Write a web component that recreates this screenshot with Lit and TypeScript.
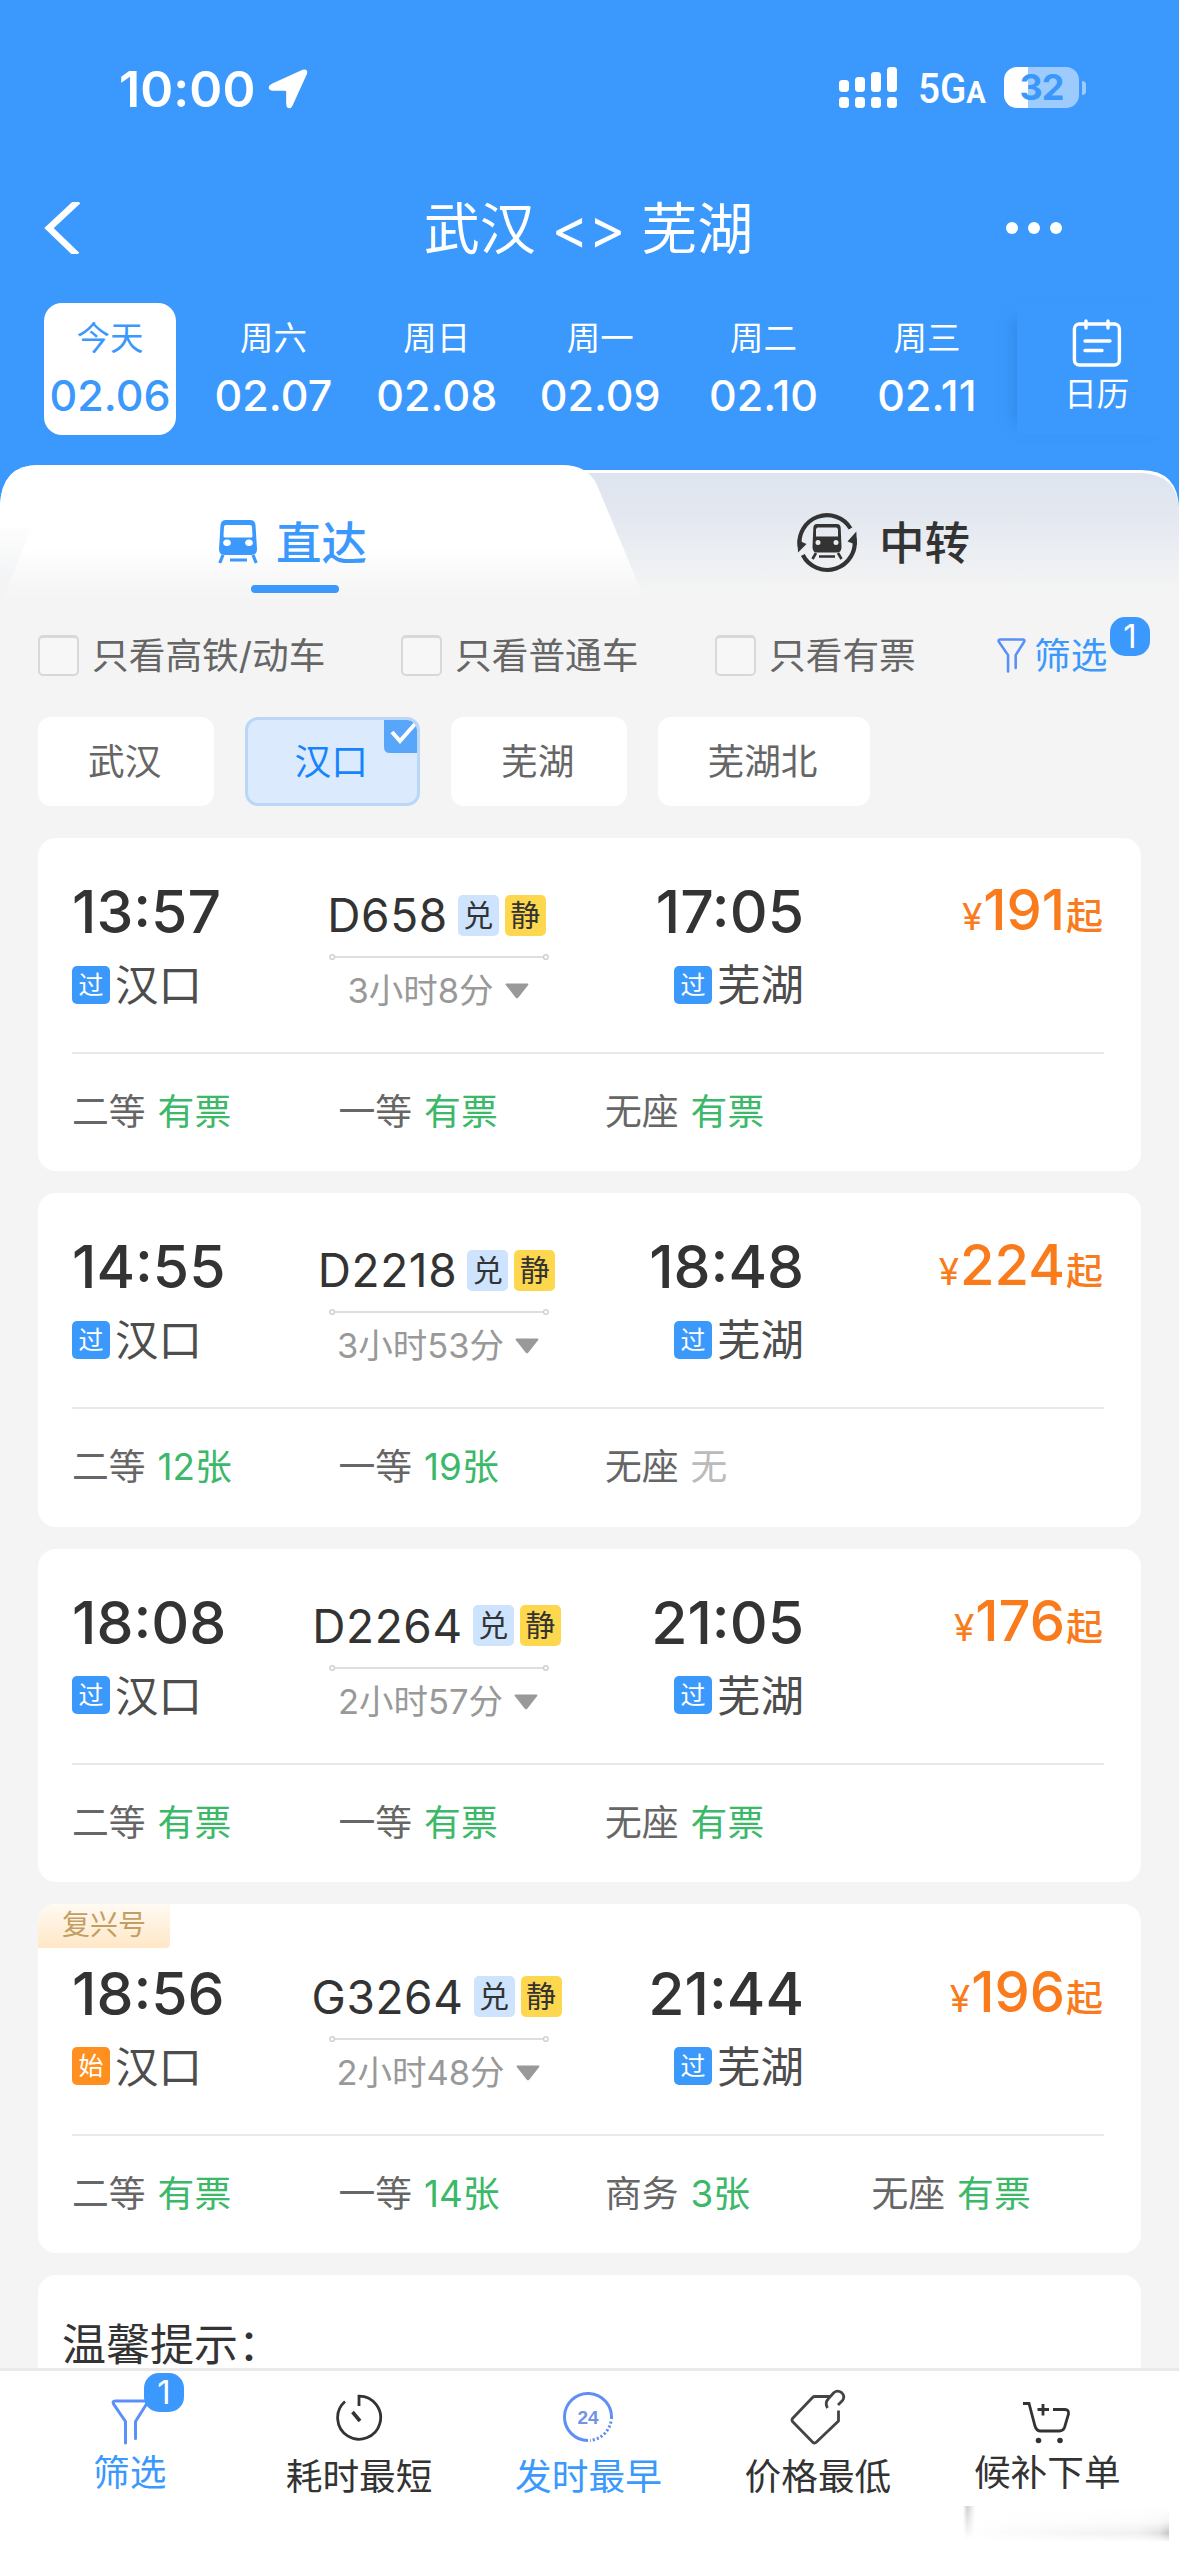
import { LitElement, html, css, svg, nothing } from "lit";
import { customElement, property } from "lit/decorators.js";
import { classMap } from "lit/directives/class-map.js";

interface Seat { kind: string; left: string; none?: boolean }
interface Train {
  dep: string; arr: string; code: string; from: string; to: string;
  origin?: boolean; span: string; price: string; ribbon?: string; seats: Seat[];
}

const DAYS = [
  ["今天", "02.06"], ["周六", "02.07"], ["周日", "02.08"],
  ["周一", "02.09"], ["周二", "02.10"], ["周三", "02.11"],
];

const TRAINS: Train[] = [
  { dep: "13:57", arr: "17:05", code: "D658", from: "汉口", to: "芜湖", span: "3小时8分", price: "191",
    seats: [{ kind: "二等", left: "有票" }, { kind: "一等", left: "有票" }, { kind: "无座", left: "有票" }] },
  { dep: "14:55", arr: "18:48", code: "D2218", from: "汉口", to: "芜湖", span: "3小时53分", price: "224",
    seats: [{ kind: "二等", left: "12张" }, { kind: "一等", left: "19张" }, { kind: "无座", left: "无", none: true }] },
  { dep: "18:08", arr: "21:05", code: "D2264", from: "汉口", to: "芜湖", span: "2小时57分", price: "176",
    seats: [{ kind: "二等", left: "有票" }, { kind: "一等", left: "有票" }, { kind: "无座", left: "有票" }] },
  { dep: "18:56", arr: "21:44", code: "G3264", from: "汉口", to: "芜湖", origin: true, span: "2小时48分", price: "196", ribbon: "复兴号",
    seats: [{ kind: "二等", left: "有票" }, { kind: "一等", left: "14张" }, { kind: "商务", left: "3张" }, { kind: "无座", left: "有票" }] },
];

const FONT = css`Inter, "Noto Sans CJK SC", sans-serif`;

const funnel = (w: number, h: number, sw: number) => html`
  <svg width=${w} height=${h} viewBox="0 0 38 46" fill="none" stroke="#5b8ff9" stroke-width=${sw} stroke-linecap="round" stroke-linejoin="round">
    <path d="M14.5 44V22.5L2.6 5.2Q1 2 4.4 2H33.6Q37 2 35.4 5.2L24.5 22.5V39.5"/>
  </svg>`;

@customElement("status-bar")
class StatusBar extends LitElement {
  static styles = css`
    :host { display: block; font-family: ${FONT}; color: #fff; }
    .bar { display: flex; align-items: center; height: 175px; padding: 0 93px 0 119px; }
    .clock { font-size: 50px; font-weight: 600; line-height: 60px; letter-spacing: 0.1px; margin-top: 2px; }
    .arrow { margin: 2px 0 0 12px; }
    .signal { margin-left: auto; }
    .net { font-family: Roboto, sans-serif; font-size: 42.5px; font-weight: 500; line-height: 50px; width: 68px; margin: 5px 18px 0 20px; white-space: nowrap; }
    .squeeze { display: inline-block; transform: scaleX(0.91); transform-origin: 0 50%; }
    .small { font-size: 32px; font-weight: 700; }
    .batt { display: flex; align-items: center; gap: 3px; }
    .cell { width: 75px; height: 41px; border-radius: 13px; display: flex; align-items: center; justify-content: center;
      background: linear-gradient(90deg, #fff 24px, #9dcbfd 24px); color: #3a98fb; font-size: 36px; font-weight: 700; letter-spacing: -1px; line-height: 41px; }
    .tip { width: 4px; height: 14px; border-radius: 0 4px 4px 0; background: #9dcbfd; }
  `;
  render() {
    const bars = [[0, 13], [16, 10], [32, 5], [48, 0]];
    return html`<div class="bar">
      <span class="clock">10:00</span>
      <svg class="arrow" width="40" height="40" viewBox="0 0 40 40" fill="#fff">
        <path d="M34.6 .8Q40.2-.8 39 4.800L24.600 36.600Q22.800 40.300 20.200 39Q18.200 38 18.200 35V23Q18.200 21.800 17 21.800H5Q1.200 21.600 .8 19Q.4 16.400 3.800 14.800Z"/>
      </svg>
      <svg class="signal" width="59" height="42" viewBox="0 0 59 42" fill="#fff">
        ${bars.map(([x, y]) => svg`<rect x=${x} y=${y} width="10" height=${25 - y} rx="3.4"/><rect x=${x} y="30" width="10" height="11" rx="3.4"/>`)}
      </svg>
      <span class="net"><span class="squeeze">5G<span class="small">A</span></span></span>
      <div class="batt"><div class="cell">32</div><div class="tip"></div></div>
    </div>`;
  }
}

@customElement("train-card")
class TrainCard extends LitElement {
  @property({ attribute: false }) train!: Train;
  static styles = css`
    :host { display: block; font-family: ${FONT}; }
    .card { box-sizing: border-box; background: #fff; border-radius: 18px; height: 333.4px; overflow: hidden; padding: 44px 37px 0 34px; }
    .flagged { height: 349px; padding-top: 0; }
    .ribbon { width: 132px; height: 44px; margin: 0 0 15.5px -34px; box-sizing: border-box; padding-left: 24px; border-radius: 18px 0 4px 0;
      background: linear-gradient(#fffaf3, #ffe7c6); color: #c39e63; font-size: 28px; line-height: 42px; white-space: nowrap; }
    .main { display: grid; grid-template-columns: 216px 300px 216px 1fr; height: 170px; align-items: start; }
    .time { font-size: 58.8px; line-height: 60px; color: #333; font-weight: 450; letter-spacing: 0; }
    .end { display: flex; flex-direction: column; gap: 21px; align-items: flex-start; white-space: nowrap; }
    .right { align-items: flex-end; }
    .stop { display: flex; align-items: center; gap: 5px; height: 44px; font-size: 43.5px; line-height: 44px; color: #4d4d4d; }
    .stop span { margin-top: -1px; }
    .mark { width: 38px; height: 38px; border-radius: 5px; background: #3b99fc; color: #fff; font-size: 25px; line-height: 38px; text-align: center; }
    .origin { background: #ff8f1f; }
    .mid { display: flex; flex-direction: column; align-items: center; padding-top: 11px; }
    .name { display: flex; align-items: center; height: 44px; gap: 6px; color: #333; margin-left: -3px; }
    .code { font-size: 46px; line-height: 44px; margin-right: 4px; letter-spacing: 0.6px; }
    .tag { width: 41px; height: 41px; border-radius: 5px; font-size: 30px; line-height: 40px; text-align: center; background: #cde3fe; }
    .quiet { background: #fdd84e; }
    .line { margin-top: 16px; margin-left: 2px; }
    .span { display: flex; align-items: center; gap: 11px; margin-top: 10px; height: 40px; font-size: 34.5px; line-height: 40px; color: #999; white-space: nowrap; }
    .price { display: flex; align-items: baseline; justify-content: flex-end; color: #f97b1c; line-height: 56px; white-space: nowrap; margin-right: 1px; }
    .yen { font-size: 37px; }
    .sum { font-size: 56px; font-weight: 500; letter-spacing: 0; margin-left: 1px; }
    .up { font-size: 37px; margin-left: 1px; font-weight: 500; }
    .seats { display: grid; grid-template-columns: repeat(4, 266.5px); border-top: 2px solid #e9e9e9; padding-top: 38px; }
    .seat { display: flex; gap: 12px; font-size: 36.8px; line-height: 40px; color: #666; white-space: nowrap; }
    .ok { color: #3bb868; }
    .no { color: #bbb; }
  `;
  render() {
    const t = this.train;
    return html`<article class=${classMap({ card: true, flagged: !!t.ribbon })}>
      ${t.ribbon ? html`<div class="ribbon">${t.ribbon}</div>` : nothing}
      <div class="main">
        <div class="end">
          <div class="time">${t.dep}</div>
          <div class="stop"><span class=${classMap({ mark: true, origin: !!t.origin })}>${t.origin ? "始" : "过"}</span>${t.from}</div>
        </div>
        <div class="mid">
          <div class="name"><span class="code">${t.code}</span><span class="tag">兑</span><span class="tag quiet">静</span></div>
          <svg class="line" width="220" height="8" viewBox="0 0 220 8" fill="none" stroke="#d3d3d3" stroke-width="1.6">
            <circle cx="3.2" cy="4" r="2.3"/><path d="M6 4H214"/><circle cx="216.8" cy="4" r="2.3"/>
          </svg>
          <div class="span">${t.span}<svg width="24" height="16" viewBox="0 0 24 16" fill="#999"><path d="M1.5.4H22.5Q24 .6 23 2.2L13.4 14.6Q12 16.2 10.6 14.6L1 2.2Q0 .6 1.5 .4Z"/></svg></div>
        </div>
        <div class="end right">
          <div class="time">${t.arr}</div>
          <div class="stop"><span class="mark">过</span>${t.to}</div>
        </div>
        <div class="price"><span class="yen">¥</span><span class="sum">${t.price}</span><span class="up">起</span></div>
      </div>
      <div class="seats">
        ${t.seats.map((s) => html`<div class="seat"><span>${s.kind}</span><span class=${s.none ? "no" : "ok"}>${s.left}</span></div>`)}
      </div>
    </article>`;
  }
}

@customElement("app-root")
class AppRoot extends LitElement {
  static styles = css`
    :host { display: block; width: 1179px; height: 2556px; overflow: hidden; position: relative; background: #f4f4f4; font-family: ${FONT}; color: #333; }
    .page { display: flex; flex-direction: column; height: 2556px; }
    .head { background: #3b98fc; color: #fff; height: 465px; flex: none; }
    .nav { display: grid; grid-template-columns: 250px 1fr 250px; align-items: center; height: 105px; }
    .back { margin-left: 44px; }
    .title { text-align: center; font-size: 56px; line-height: 70px; white-space: pre; padding: 3px 2px 0 0; }
    .more { margin-left: 77px; }
    .days { display: flex; margin-top: 23px; padding-left: 44px; height: 132px; }
    .day { width: 132px; margin-right: 31.4px; height: 132px; box-sizing: border-box; padding-top: 15px; text-align: center; border-radius: 18px; white-space: nowrap; flex: none; }
    .on { background: #fff; color: #3b98fc; }
    .week { font-size: 33.5px; line-height: 40px; }
    .date { font-size: 43px; line-height: 40px; margin-top: 17px; letter-spacing: 0; font-weight: 450; }
    .cal { flex: 1; margin-left: -7px; display: flex; flex-direction: column; align-items: center; padding-top: 16px; height: 116px; font-size: 32.5px; line-height: 38px; gap: 9px;
      padding-right: 3px; box-shadow: -14px 2px 14px -13px #2e86e2; }
    .tabs { position: relative; height: 135px; flex: none; background: linear-gradient(#3b98fc 60px, #f4f4f4 60px); display: grid; grid-template-columns: 598px 1fr; }
    .shape { position: absolute; left: 0; top: 0; }
    .tab { position: relative; display: flex; align-items: center; height: 154px; font-size: 45.5px; line-height: 50px; }
    .tab span { padding-top: 3px; }
    .direct { padding-left: 218px; gap: 18px; color: #3b98fc; font-weight: 500; }
    .direct::after { content: ""; position: absolute; left: 251px; top: 120px; width: 88px; height: 8px; border-radius: 4px; background: #3b98fc; }
    .transfer { padding-left: 199px; gap: 20px; font-weight: 500; }
    .filters { display: grid; grid-template-columns: 363px 314px 282px auto; align-items: center; padding: 35px 0 0 38px; height: 40px; font-size: 36.7px; line-height: 40px; color: #666; white-space: nowrap; flex: none; }
    .check { display: flex; align-items: center; gap: 13px; }
    .box { width: 41px; height: 41px; box-sizing: border-box; border: 2px solid #d8d8d8; border-top-width: 3px; border-radius: 5px; background: #f7f7f7; }
    .pick { position: relative; display: flex; align-items: center; gap: 8px; color: #3b98fc; }
    .badge { position: absolute; box-sizing: border-box; width: 40px; height: 39px; border-radius: 15px; background: #3b98fc; color: #fff; font-size: 33px; line-height: 38px; text-align: center; }
    .pickbadge { left: 113px; top: -19px; }
    .chips { display: flex; gap: 31px; padding: 42px 38px 0; flex: none; }
    .chip { position: relative; box-sizing: border-box; width: 175.5px; height: 89px; border-radius: 13px; background: #fff; font-size: 36.7px; line-height: 89px; text-align: center; color: #666; overflow: hidden; padding-right: 2px; }
    .wide { width: 212px; }
    .active { background: #dbebfd; border: 3px solid #bad7f7; color: #1684fc; line-height: 83px; }
    .tick { position: absolute; right: 0; top: -1px; }
    .list { display: flex; flex-direction: column; gap: 22px; padding: 32px 38px 0; flex: 1; min-height: 0; }
    .tips { background: #fff; border-radius: 18px 18px 0 0; flex: 1; padding: 48px 0 0 24px; font-size: 44px; line-height: 44px; box-sizing: border-box; }
    .dock { height: 188px; flex: none; box-sizing: border-box; border-top: 3px solid #e9e9e9; background: #fff; padding: 0 17px 0 15px; display: grid; grid-template-columns: repeat(5, 1fr); }
    .item { position: relative; display: flex; flex-direction: column; align-items: center; font-size: 36.7px; line-height: 40px; white-space: nowrap; }
    .pic { height: 86px; display: flex; align-items: center; box-sizing: border-box; padding-top: 5px; }
    .edge .pic { height: 82px; padding-top: 20px; }
    .sel { color: #3b98fc; }
    .dockbadge { left: 129px; top: 2px; }
    .glare { position: absolute; right: 10px; bottom: 10px; }
  `;

  render() {
    return html`<div class="page">
      <header class="head">
        <status-bar></status-bar>
        <div class="nav">
          <svg class="back" width="38" height="52" viewBox="0 0 38 52" fill="none" stroke="#fff" stroke-width="6.5"><path d="M34 -1L5 26L33 53"/></svg>
          <div class="title">武汉 &lt;&gt; 芜湖</div>
          <svg class="more" width="56" height="14" viewBox="0 0 56 14" fill="#fff"><circle cx="6" cy="7" r="6"/><circle cx="28" cy="7" r="6"/><circle cx="50" cy="7" r="6"/></svg>
        </div>
        <div class="days">
          ${DAYS.map(([w, d], i) => html`<div class=${classMap({ day: true, on: i === 0 })}><div class="week">${w}</div><div class="date">${d}</div></div>`)}
          <div class="cal">
            <svg width="50" height="48" viewBox="0 0 50 48" fill="none" stroke="#fff" stroke-width="3.4" stroke-linecap="round">
              <rect x="2.4" y="5" width="45" height="41" rx="5"/><path d="M14 2V9M36 2V9M13 22H38M13 31.500H30"/>
            </svg>日历
          </div>
        </div>
      </header>

      <nav class="tabs">
        <svg class="shape" width="1179" height="135" viewBox="0 0 1179 135">
          <defs>
            <linearGradient id="r" x1="0" y1="0" x2="0" y2="1"><stop offset="0" stop-color="#dee4ef"/><stop offset=".35" stop-color="#e3e8f0"/><stop offset="1" stop-color="#f4f4f4"/></linearGradient>
            <linearGradient id="l" x1="0" y1="0" x2="0" y2="1"><stop offset="0" stop-color="#fff"/><stop offset=".6" stop-color="#fff"/><stop offset="1" stop-color="#f4f4f4"/></linearGradient>
            <linearGradient id="b" x1="0" y1="0" x2="0" y2="1"><stop offset="0" stop-color="#fff"/><stop offset=".4" stop-color="#fff"/><stop offset=".8" stop-color="#f4f5f6"/><stop offset="1" stop-color="#f4f4f4"/></linearGradient>
          </defs>
          <path d="M500 5H1141Q1179 5 1179 46V125H500Z" fill="#fff"/>
          <path d="M500 8H1141Q1179 9 1179 48V127H500Z" fill="url(#r)"/>
          <path d="M0 40Q2 0 38 0H200V135H0Z" fill="url(#b)"/>
          <path d="M0 40Q2 0 38 0H562Q588 0 597 20L645 135H3L31 62H0Z" fill="url(#l)"/>
        </svg>
        <div class="tab direct">
          <svg width="40" height="44" viewBox="0 0 40 44">
            <path fill="#3b98fc" fill-rule="evenodd" d="M8 0H32Q37 0 37.500 5L39 29Q39 35 33 35H7Q1 35 1 29L2.500 5Q3 0 8 0ZM8 5Q6 5 6 7L5.500 16Q5.500 17.500 7 17.500H33Q34.500 17.500 34.500 16L34 7Q34 5 32 5ZM9 19.500A3.300 3.300 0 1 0 9 26A3.300 3.300 0 1 0 9 19.500ZM31 19.500A3.300 3.300 0 1 0 31 26A3.300 3.300 0 1 0 31 19.500Z"/>
            <path d="M5 35L1.800 43M35 35L38.200 43M12 40H29" stroke="#3b98fc" stroke-width="3.200" fill="none"/>
          </svg>
          <span>直达</span>
        </div>
        <div class="tab transfer">
          <svg width="62" height="62" viewBox="0 0 62 62">
            <g fill="none" stroke="#333" stroke-width="4.200">
              <path d="M2.800 36A27.500 27.500 0 0 1 53.500 17.500"/><path d="M57.400 27A27.500 27.500 0 0 1 5.800 44"/>
              <path d="M19 42L15.500 48M41 42L44.500 48M22 45.500H38" stroke-width="2.600"/>
            </g>
            <path d="M1 41.500L.5 29L9.500 33ZM59.300 20.500L60 34L50.500 30.500Z" fill="#333"/>
            <path fill="#333" fill-rule="evenodd" d="M20 13H40Q43.500 13 43.700 17L44.500 36Q44.500 41.500 40 41.500H20Q15.500 41.500 15.500 36L16.300 17Q16.500 13 20 13ZM20.500 16.500L19 18V25.500H41V18L39.500 16.500ZM21 29A2.500 2.500 0 1 0 21 34A2.500 2.500 0 1 0 21 29ZM39 29A2.500 2.500 0 1 0 39 34A2.500 2.500 0 1 0 39 29Z"/>
          </svg>
          <span>中转</span>
        </div>
      </nav>

      <div class="filters">
        ${["只看高铁/动车", "只看普通车", "只看有票"].map((t) => html`<div class="check"><span class="box"></span>${t}</div>`)}
        <div class="pick">${funnel(29, 35, 3.4)}<span>筛选</span><span class="badge pickbadge">1</span></div>
      </div>

      <div class="chips">
        <div class="chip">武汉</div>
        <div class="chip active">汉口
          <svg class="tick" width="33" height="34" viewBox="0 0 33 34"><path d="M0 0H33V34H6Q0 34 0 28Z" fill="#57a6fa"/><path d="M8 13L16 22L31 5" fill="none" stroke="#fff" stroke-width="4"/></svg>
        </div>
        <div class="chip">芜湖</div>
        <div class="chip wide">芜湖北</div>
      </div>

      <main class="list">
        ${TRAINS.map((t) => html`<train-card .train=${t}></train-card>`)}
        <section class="tips">温馨提示：</section>
      </main>

      <footer class="dock">
        <div class="item edge sel"><div class="pic">${funnel(38, 46, 3)}</div>筛选<span class="badge dockbadge">1</span></div>
        <div class="item"><div class="pic">
          <svg width="48" height="50" viewBox="0 0 48 50" fill="none" stroke="#333" stroke-width="2.800"><path d="M24 14V4.200A21.500 21.500 0 1 1 10 9.500"/><path d="M17.500 20L25 29" stroke-width="3.600"/></svg>
        </div>耗时最短</div>
        <div class="item sel"><div class="pic">
          <svg width="50" height="50" viewBox="0 0 50 50"><g fill="none" stroke="#5f8ff5" stroke-width="3"><path d="M25 48.500A23.500 23.500 0 1 1 48.400 27"/><path d="M48 29.500A23.500 23.500 0 0 1 27 48.400" stroke-dasharray="2.200 2"/></g>
          <text x="25" y="32" text-anchor="middle" font-family="Liberation Sans, sans-serif" font-weight="700" font-size="19" fill="#7293e6">24</text></svg>
        </div>发时最早</div>
        <div class="item"><div class="pic">
          <svg width="56" height="56" viewBox="0 0 56 56" fill="none" stroke="#444" stroke-width="2.800" stroke-linejoin="round"><path d="M40 7.500H25Q23.500 7.500 22.500 8.500L2.500 29.500Q1.500 31 2.500 32.500L22.500 53Q24.500 55 26.500 53L48.500 32V21.500"/><path d="M37.500 19Q34.500 14 38.500 9.500L44 3.500Q47.500 .8 51.500 3.500Q55.500 7 52.500 11.500L48 16"/></svg>
        </div>价格最低</div>
        <div class="item edge"><div class="pic">
          <svg width="48" height="46" viewBox="0 0 48 46" fill="none" stroke="#333" stroke-width="2.800"><path d="M0 4.500H6L12 27Q13.500 32 17.500 32H36.500Q40 32 41.500 28.500L45.500 15Q46 10.500 42 10.500H30"/><path d="M14.500 10.500H26M20 5V16.500"/><circle cx="15.500" cy="41.500" r="2.800" fill="#333" stroke="none"/><circle cx="37" cy="41.500" r="2.800" fill="#333" stroke="none"/></svg>
        </div>候补下单</div>
      </footer>
    </div>
    <svg class="glare" width="230" height="40" viewBox="0 0 230 40">
      <defs>
        <linearGradient id="g1" x1="0" y1="0" x2="1" y2="0"><stop offset="0" stop-color="#fff"/><stop offset=".35" stop-color="#cfcfcf"/><stop offset="1" stop-color="#fff"/></linearGradient>
        <linearGradient id="g2" x1="0" y1="0" x2="1" y2="0"><stop offset="0" stop-color="#fff"/><stop offset=".85" stop-color="#f0f0f0"/><stop offset=".95" stop-color="#e2e2e2"/><stop offset="1" stop-color="#c4c4c4"/></linearGradient>
        <linearGradient id="g3" x1="0" y1="0" x2="0" y2="1"><stop offset="0" stop-color="#fff"/><stop offset=".4" stop-color="#fff" stop-opacity=".8"/><stop offset=".68" stop-color="#fff" stop-opacity="0"/><stop offset=".9" stop-color="#fff"/></linearGradient>
        <linearGradient id="g4" x1="0" y1="0" x2="0" y2="1"><stop offset="0" stop-color="#fff" stop-opacity="0"/><stop offset=".9" stop-color="#fff"/></linearGradient>
      </defs>
      <rect x="30" y="0" width="200" height="40" fill="url(#g2)"/><rect x="30" y="0" width="200" height="40" fill="url(#g3)"/>
      <rect x="24" y="0" width="12" height="36" fill="url(#g1)"/><rect x="24" y="0" width="12" height="37" fill="url(#g4)"/>
    </svg>`;
  }
}
